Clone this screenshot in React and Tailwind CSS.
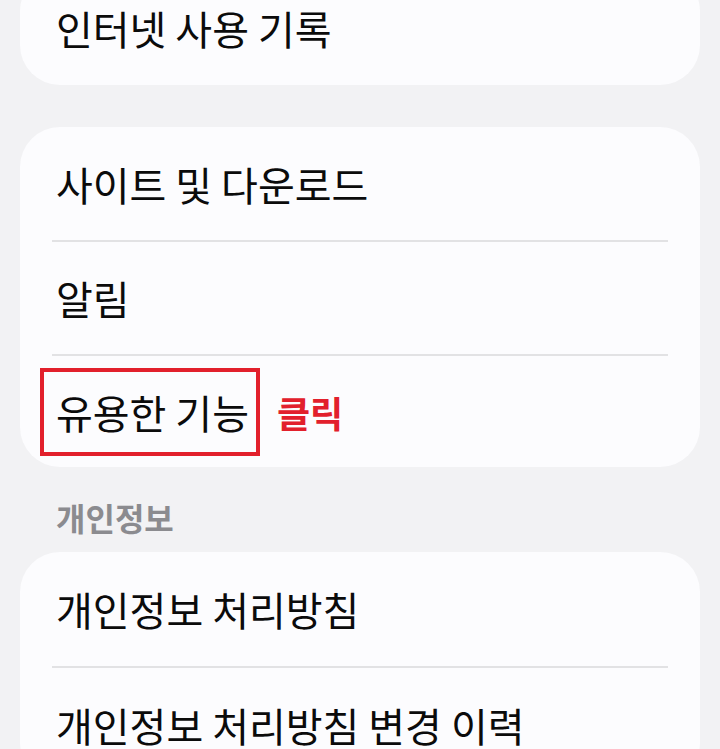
export default function App() {
  const font = { fontFamily: '"Noto Sans CJK KR", "Noto Sans", sans-serif' };
  return (
    <div className="w-[720px] h-[749px] overflow-hidden bg-[#f2f2f4]" style={font}>
      <div className="-mt-[29px] flex flex-col">
        <div className="mx-[20px] rounded-[40px] bg-[#fcfcfe]">
          <div className="h-[114px] flex items-center pl-[36px] text-[40px] text-[#0b0b0b]">인터넷 사용 기록</div>
        </div>

        <div className="mx-[20px] mt-[42px] rounded-[40px] bg-[#fcfcfe] flex flex-col">
          <div className="h-[113px] flex items-center pl-[36px] text-[40px] text-[#0b0b0b]">사이트 및 다운로드</div>
          <div className="mx-[32px] h-[2px] bg-[#e2e2e4]" />
          <div className="h-[112px] flex items-center pl-[36px] text-[40px] text-[#0b0b0b]">알림</div>
          <div className="mx-[32px] h-[2px] bg-[#e2e2e4]" />
          <div className="h-[111px] flex items-center pl-[20px] gap-[17px]">
            <div className="h-[88px] border-[4px] border-[#e2202c] flex items-center pl-[12px] pr-[7px] text-[40px] text-[#0b0b0b]">유용한 기능</div>
            <div className="text-[36px] font-bold text-[#e2202c]">클릭</div>
          </div>
        </div>

        <div className="h-[85px] pt-[30px] pl-[56px] text-[32px] leading-[40px] font-bold text-[#8b8b8f]">개인정보</div>

        <div className="mx-[20px] rounded-[40px] bg-[#fcfcfe] flex flex-col">
          <div className="h-[114px] flex items-center pl-[36px] text-[40px] text-[#0b0b0b]">개인정보 처리방침</div>
          <div className="mx-[32px] h-[2px] bg-[#e2e2e4]" />
          <div className="h-[114px] flex items-center pl-[36px] text-[40px] text-[#0b0b0b]">개인정보 처리방침 변경 이력</div>
        </div>
      </div>
    </div>
  );
}
